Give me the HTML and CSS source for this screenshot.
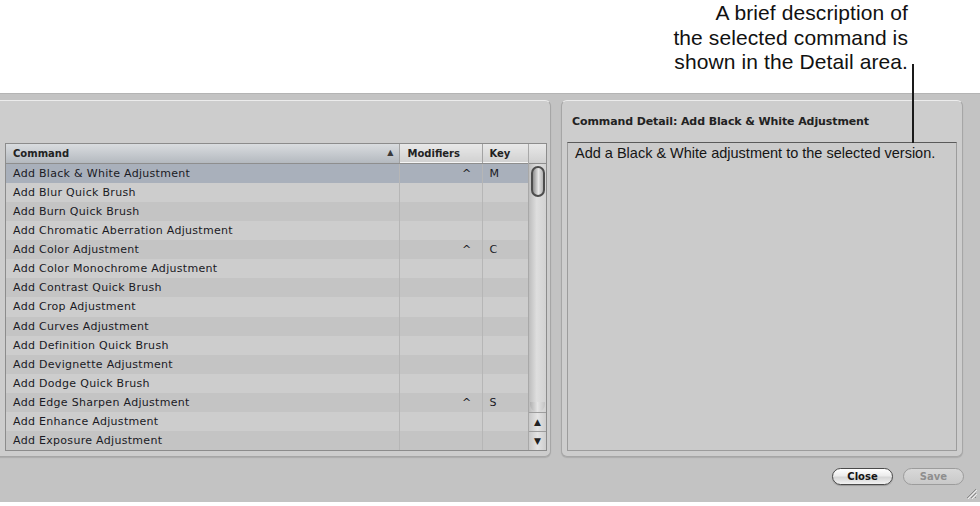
FILE: index.html
```html
<!DOCTYPE html>
<html lang="en">
<head>
    <meta charset="UTF-8">
    <meta name="viewport" content="width=device-width, initial-scale=1.0">
    <title>Command Editor</title>
    <link rel="stylesheet" href="styles.css">
</head>
<body>
    <!-- Callout above the window -->
    <div class="callout">
        <p>A brief description of<br>the selected command is<br>shown in the Detail area.</p>
    </div>
    <span class="leader"></span>

    <div class="window">
        <div class="panels">
            <!-- Command list -->
            <div class="panel panel-list">
                <div class="list">
                    <table class="cmds">
                        <colgroup>
                            <col class="col-cmd">
                            <col class="col-mod">
                            <col class="col-key">
                        </colgroup>
                        <thead>
                            <tr>
                                <th class="sorted">Command<span class="sort">&#9650;</span></th>
                                <th>Modifiers</th>
                                <th class="key">Key</th>
                            </tr>
                        </thead>
                        <tbody>
                            <tr class="selected"><td>Add Black &amp; White Adjustment</td><td class="mod">^</td><td class="key">M</td></tr>
                            <tr><td>Add Blur Quick Brush</td><td class="mod"></td><td class="key"></td></tr>
                            <tr><td>Add Burn Quick Brush</td><td class="mod"></td><td class="key"></td></tr>
                            <tr><td>Add Chromatic Aberration Adjustment</td><td class="mod"></td><td class="key"></td></tr>
                            <tr><td>Add Color Adjustment</td><td class="mod">^</td><td class="key">C</td></tr>
                            <tr><td>Add Color Monochrome Adjustment</td><td class="mod"></td><td class="key"></td></tr>
                            <tr><td>Add Contrast Quick Brush</td><td class="mod"></td><td class="key"></td></tr>
                            <tr><td>Add Crop Adjustment</td><td class="mod"></td><td class="key"></td></tr>
                            <tr><td>Add Curves Adjustment</td><td class="mod"></td><td class="key"></td></tr>
                            <tr><td>Add Definition Quick Brush</td><td class="mod"></td><td class="key"></td></tr>
                            <tr><td>Add Devignette Adjustment</td><td class="mod"></td><td class="key"></td></tr>
                            <tr><td>Add Dodge Quick Brush</td><td class="mod"></td><td class="key"></td></tr>
                            <tr><td>Add Edge Sharpen Adjustment</td><td class="mod">^</td><td class="key">S</td></tr>
                            <tr><td>Add Enhance Adjustment</td><td class="mod"></td><td class="key"></td></tr>
                            <tr><td>Add Exposure Adjustment</td><td class="mod"></td><td class="key"></td></tr>
                        </tbody>
                    </table>
                    <div class="vscroll">
                        <div class="vs-head"></div>
                        <div class="vs-track">
                            <div class="vs-thumb"></div>
                        </div>
                        <div class="vs-btn">&#9650;</div>
                        <div class="vs-btn">&#9660;</div>
                    </div>
                </div>
            </div>

            <!-- Detail area -->
            <div class="panel panel-detail">
                <h2>Command Detail: Add Black &amp; White Adjustment</h2>
                <div class="detail-box">Add a Black &amp; White adjustment to the selected version.</div>
            </div>
        </div>

        <div class="actions">
            <button class="btn">Close</button>
            <button class="btn" disabled>Save</button>
        </div>

        <svg class="grip" width="12" height="12" viewBox="0 0 12 12">
            <path d="M11 2 L2 11 M11 6 L6 11 M11 10 L10 11" stroke="#8a8a8a" stroke-width="1"/>
            <path d="M12 3 L3 12 M12 7 L7 12" stroke="#eeeeee" stroke-width="1"/>
        </svg>
    </div>
</body>
</html>
```

FILE: styles.css
```css
body {
    margin: 0;
    width: 980px;
    height: 506px;
    position: relative;
    overflow: hidden;
    background: #fff;
    font-family: "DejaVu Sans", Verdana, sans-serif;
    color: #1c1c1c;
}

/* callout */
.callout {
    height: 93px;
}
.callout p {
    margin: 0;
    padding: 1px 72px 0 0;
    text-align: right;
    font: 21px/24.5px "Liberation Sans", Arial, sans-serif;
    letter-spacing: 0.1px;
    color: #111;
}
.leader {
    position: absolute;
    left: 912px;
    top: 64px;
    width: 2px;
    height: 79px;
    background: #1a1a1a;
    z-index: 5;
}

/* window */
.window {
    position: relative;
    height: 409px;
    box-sizing: border-box;
    background: #c3c3c3;
    border-top: 1px solid #b4b4b4;
    padding-top: 6px;
}
.panels {
    display: flex;
    gap: 10px;
    height: 357px;
}
.panel {
    box-sizing: border-box;
    background: #cdcdcd;
    border: 1px solid #a6a6a6;
    border-top-color: #ececec;
    border-radius: 6px;
    box-shadow: 0 1px 1px rgba(0, 0, 0, 0.12);
}
.panel-list {
    width: 559px;
    margin-left: -8px;
    padding: 42px 3px 0 12px;
}
.list {
    display: flex;
    height: 308px;
    box-sizing: border-box;
    border: 1px solid #8c8c8c;
}

/* table */
.cmds {
    width: 522px;
    border-collapse: collapse;
    table-layout: fixed;
}
.col-cmd { width: 393px; }
.col-mod { width: 83px; }
.col-key { width: 46px; }
.cmds th {
    height: 19px;
    padding: 0 8px;
    text-align: left;
    font-size: 10px;
    font-weight: bold;
    color: #222;
    background: linear-gradient(#e8e8e8, #d0d0d0);
    border-left: 1px solid #a3a3a3;
    border-bottom: 1px solid #8e8e8e;
    box-shadow: inset 0 -1px 0 #f4f4f4;
}
.cmds th.sorted {
    padding-left: 7px;
    border-left: none;
    background: linear-gradient(#d9dcdf, #b4b9bf);
    box-shadow: none;
}
.cmds th.key {
    padding-left: 7px;
}
.sort {
    float: right;
    margin-right: -3px;
    font-size: 8px;
    color: #3a3a3a;
}
.cmds td {
    height: 19.05px;
    padding: 0 7px;
    font-size: 11px;
    letter-spacing: 0.3px;
    white-space: nowrap;
    color: #1a1a24;
    border-left: 1px solid #b6b6b6;
}
.cmds td:first-child {
    border-left: none;
}
.cmds td.mod {
    text-align: right;
    padding-right: 10px;
}
.cmds tbody tr:nth-child(odd) {
    background: #c4c4c4;
}
.cmds tbody tr:nth-child(even) {
    background: #cdcdcd;
}
.cmds tbody tr.selected {
    background: #a9b0bb;
}

/* scrollbar */
.vscroll {
    width: 18px;
    display: flex;
    flex-direction: column;
    border-left: 1px solid #a8a8a8;
}
.vs-head {
    height: 19px;
    background: linear-gradient(#e8e8e8, #d0d0d0);
    border-bottom: 1px solid #8e8e8e;
}
.vs-track {
    flex: 1;
    position: relative;
    background: linear-gradient(90deg, #bdbdbd, #dedede 45%, #d2d2d2);
}
.vs-track::after {
    content: "";
    position: absolute;
    left: 1px;
    right: 1px;
    bottom: 0;
    height: 10px;
    border-radius: 0 0 8px 8px;
    background: linear-gradient(90deg, #b0b0b0, #e4e4e4 50%, #c4c4c4);
}
.vs-thumb {
    margin: 2px auto 0;
    width: 10px;
    height: 27px;
    border: 2px solid #4d4d4d;
    border-radius: 8px;
    background: linear-gradient(90deg, #8e8e8e, #e6e6e6 55%, #b2b2b2);
}
.vs-btn {
    height: 18px;
    text-align: center;
    font-size: 9px;
    line-height: 18px;
    color: #222;
    background: linear-gradient(90deg, #c8c8c8, #e4e4e4 50%, #cdcdcd);
    border-top: 1px solid #9d9d9d;
}

/* detail */
.panel-detail {
    width: 402px;
    padding: 14px 5px 5px;
    display: flex;
    flex-direction: column;
}
.panel-detail h2 {
    margin: 0 0 13px;
    padding-left: 5px;
    font-size: 11px;
    line-height: 14px;
    letter-spacing: -0.1px;
    font-weight: bold;
    color: #222;
}
.detail-box {
    flex: 1;
    background: #cbcbcb;
    border: 1px solid #9c9c9c;
    border-top-color: #5a5a5a;
    padding: 2px 7px;
    font: 14.5px/17px "Liberation Sans", Arial, sans-serif;
    color: #151515;
}

/* buttons */
.actions {
    display: flex;
    justify-content: flex-end;
    gap: 10px;
    padding: 11px 16px 0 0;
}
.btn {
    width: 61px;
    height: 17px;
    padding: 0;
    border: 1px solid #4a4a4a;
    border-radius: 9px;
    background: linear-gradient(#ffffff, #ececec 45%, #d6d6d6 55%, #f2f2f2);
    box-shadow: 0 1px 1px rgba(0, 0, 0, 0.2);
    font-family: "DejaVu Sans", Verdana, sans-serif;
    font-size: 10px;
    font-weight: bold;
    color: #151515;
}
.btn:disabled {
    border-color: #9c9c9c;
    background: linear-gradient(#d8d8d8, #c9c9c9);
    box-shadow: none;
    color: #8e8e8e;
}
.grip {
    position: absolute;
    right: 3px;
    bottom: 3px;
}
```
